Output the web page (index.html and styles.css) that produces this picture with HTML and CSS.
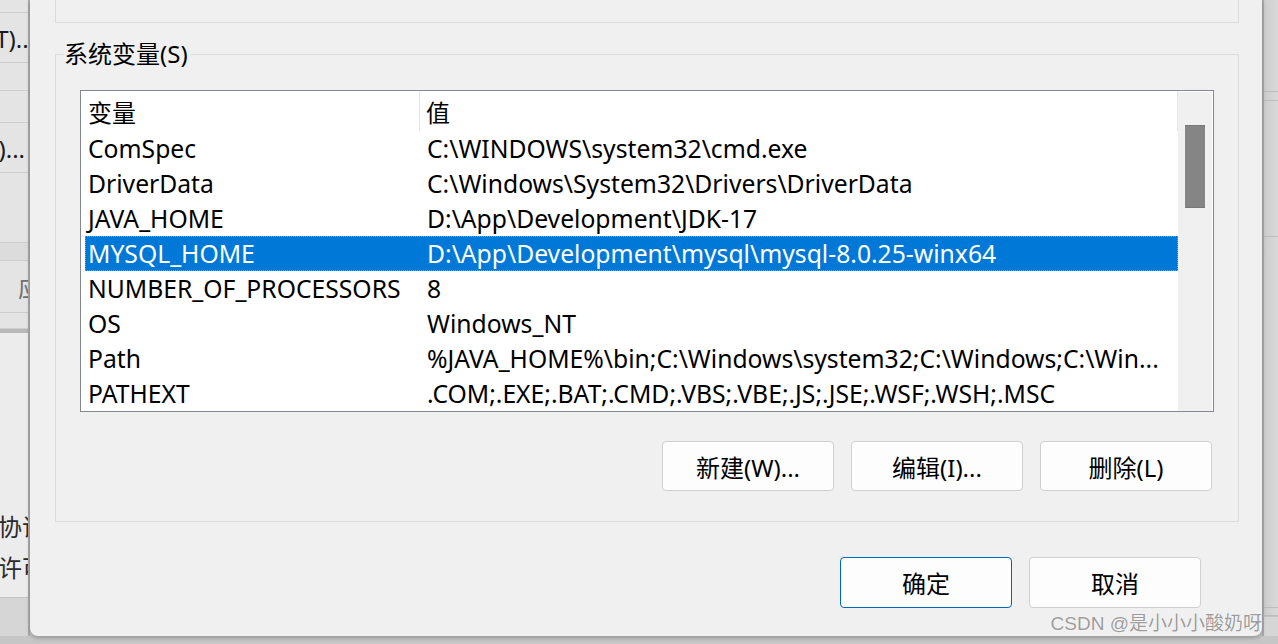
FILE: index.html
```html
<!DOCTYPE html>
<html lang="zh-CN">
<head>
  <meta charset="utf-8" />
  <title>环境变量</title>
  <meta name="viewport" content="width=device-width, initial-scale=1" />
  <link rel="stylesheet" href="styles.css">
</head>
<body>
  <div class="desk">
    <!-- window behind, left -->
    <div class="behind behindLeft">
      <div class="strip" style="height:13px"></div>
      <div class="strip cut" style="height:50px"><span class="endLong">编辑(T)...</span></div>
      <div class="strip" style="height:28px"></div>
      <div class="strip" style="height:32px"></div>
      <div class="strip cut" style="height:50px"><span class="endShort">浏览(B)...</span></div>
      <div class="strip" style="height:70px"></div>
      <div class="strip band" style="height:18px"></div>
      <div class="strip muted" style="height:52px"><span class="applyText">应用(A)</span></div>
      <div class="strip" style="height:16px"></div>
      <div class="strip edge"></div>
      <div class="strip plain" style="height:172px"></div>
      <div class="strip plain textRow" style="height:41px"><span>协议</span></div>
      <div class="strip plain textRow" style="height:41px"><span>许可</span></div>
      <div class="strip plain" style="height:10px"></div>
      <div class="strip low"></div>
    </div>

    <!-- ENVIRONMENT VARIABLES DIALOG -->
    <div class="dialog">
      <div class="groupTop"></div>

      <fieldset class="groupSys">
        <legend>系统变量(S)</legend>

        <div class="listbox">
          <div class="list">
            <div class="headRow">
              <div class="hCol1">变量</div>
              <div class="hCol2">值</div>
            </div>
            <div class="row"><div class="col1">ComSpec</div><div class="col2">C:\WINDOWS\system32\cmd.exe</div></div>
            <div class="row"><div class="col1">DriverData</div><div class="col2">C:\Windows\System32\Drivers\DriverData</div></div>
            <div class="row"><div class="col1">JAVA_HOME</div><div class="col2">D:\App\Development\JDK-17</div></div>
            <div class="row selected"><div class="col1">MYSQL_HOME</div><div class="col2">D:\App\Development\mysql\mysql-8.0.25-winx64</div></div>
            <div class="row"><div class="col1">NUMBER_OF_PROCESSORS</div><div class="col2">8</div></div>
            <div class="row"><div class="col1">OS</div><div class="col2">Windows_NT</div></div>
            <div class="row"><div class="col1">Path</div><div class="col2">%JAVA_HOME%\bin;C:\Windows\system32;C:\Windows;C:\Win...</div></div>
            <div class="row"><div class="col1">PATHEXT</div><div class="col2">.COM;.EXE;.BAT;.CMD;.VBS;.VBE;.JS;.JSE;.WSF;.WSH;.MSC</div></div>
          </div>
          <div class="scrollbar"><div class="thumb"></div></div>
        </div>

        <div class="btnRow">
          <button class="btn">新建(W)...</button>
          <button class="btn">编辑(I)...</button>
          <button class="btn">删除(L)</button>
        </div>
      </fieldset>

      <div class="dialogBtns">
        <button class="btn btnTall btnDefault">确定</button>
        <button class="btn btnTall">取消</button>
      </div>
    </div>

    <!-- window behind, right -->
    <div class="behind behindRight">
      <div class="strip" style="height:92px"></div>
      <div class="strip" style="height:9px"></div>
      <div class="strip" style="height:136px"></div>
      <div class="strip" style="height:371px"></div>
      <div class="strip" style="height:8px"></div>
      <div class="strip low"></div>
    </div>
  </div>

  <div class="watermark">CSDN @是小小小酸奶呀</div>
</body>
</html>
```

FILE: styles.css
```css
/* ========== GLOBAL ========== */
* {
  box-sizing: border-box;
  margin: 0;
  padding: 0;
}
body {
  width: 1278px;
  height: 644px;
  background: #c6c6c6;
  font-family: "Noto Sans", "Noto Sans CJK SC", sans-serif;
  font-size: 24px;
  color: #000;
  overflow: hidden;
  position: relative;
}
.desk {
  display: flex;
  height: 636px;
}

/* ========== WINDOWS BEHIND ========== */
.behind {
  flex: none;
  display: flex;
  flex-direction: column;
  overflow: hidden;
}
.behindLeft {
  width: 30px;
  background: #e4e4e4;
  border-right: 2px solid #ababab;
}
.behindRight {
  width: 16px;
  background: linear-gradient(90deg, #cdcdcd, #d9d9d9);
  border-left: 2px solid #ababab;
}
.strip {
  flex: none;
  border-bottom: 1px solid #cdcdcd;
  display: flex;
  align-items: center;
  white-space: nowrap;
}
.behindRight .strip {
  border-bottom-color: #bdbdbd;
}
.strip.cut {
  justify-content: flex-end;
  color: #1a1a1a;
}
.endLong {
  margin-right: -7px;
}
.endShort {
  margin-right: 3px;
}
.strip.muted {
  color: #707070;
}
.applyText {
  margin-left: 18px;
}
.strip.band {
  background: #dcdcdc;
}
.strip.edge {
  height: 4px;
  background: #b9b9b9;
  border: none;
}
.strip.plain {
  background: #ececec;
  border: none;
}
.strip.textRow {
  color: #2b2b2b;
}
.strip.textRow span {
  margin-left: -2px;
}
.strip.low {
  flex: 1;
  background: #d6d6d6;
  border-top: 1px solid #c4c4c4;
  border-bottom: none;
}

/* ========== DIALOG ========== */
.dialog {
  flex: none;
  width: 1232px;
  background: #f0f0f0;
  border-radius: 0 0 8px 8px;
  padding: 0 23px 0 25px;
  display: flex;
  flex-direction: column;
  box-shadow: 0 2px 4px rgba(0, 0, 0, 0.25);
  position: relative;
  z-index: 1;
}
.groupTop {
  height: 23px;
  border: 1px solid #dcdcdc;
  border-top: none;
}
.groupSys {
  margin-top: 19px;
  border: 1px solid #dcdcdc;
  padding: 0 24px 30px 24px;
}
.groupSys legend {
  margin-left: -16px;
  padding: 0 3px 0 0;
  line-height: 24px;
  font-size: 24px;
}

/* ========== LIST ========== */
.listbox {
  margin-top: 24px;
  height: 322px;
  border: 1px solid #828790;
  background: #fff;
  display: flex;
  overflow: hidden;
}
.list {
  width: 1097px;
  flex: none;
}
.headRow {
  height: 40px;
  display: flex;
  align-items: stretch;
}
.hCol1,
.hCol2 {
  display: flex;
  align-items: center;
  border-right: 1px solid #e5e5e5;
}
.hCol1 {
  width: 339px;
  padding-left: 7px;
}
.hCol2 {
  flex: 1;
  padding-left: 6px;
}
.row {
  margin-left: 4px;
  height: 35px;
  display: flex;
  align-items: center;
  white-space: nowrap;
  font-size: 24.7px;
}
.col1 {
  width: 339px;
  padding-left: 3px;
  flex: none;
}
.col2 {
  flex: 1;
  padding-left: 3px;
  overflow: hidden;
  text-overflow: ellipsis;
}
.row.selected {
  background: #0078d7;
  color: #fff;
  outline: 1px dotted #f08a24;
  outline-offset: -1px;
}
.scrollbar {
  flex: none;
  width: 34px;
  margin-top: 1px;
  background: #f0f0f0;
  padding: 33px 0 0 7px;
}
.thumb {
  width: 20px;
  height: 83px;
  background: #858585;
  border-top: 1px solid #777;
  border-bottom: 1px solid #777;
}

/* ========== BUTTONS ========== */
.btnRow {
  margin-top: 29px;
  display: flex;
  justify-content: flex-end;
  gap: 17px;
  padding-right: 2px;
}
.btn {
  width: 172px;
  height: 50px;
  border: 1px solid #d0d0d0;
  border-radius: 4px;
  background: #fdfdfd;
  font-family: inherit;
  font-size: 24px;
  color: #000;
  cursor: pointer;
}
.dialogBtns {
  margin-top: 35px;
  display: flex;
  justify-content: flex-end;
  gap: 17px;
  padding-right: 38px;
}
.btnTall {
  height: 51px;
}
.btnDefault {
  border-color: #0067c0;
}

/* ========== WATERMARK ========== */
.watermark {
  position: absolute;
  right: 16px;
  bottom: 8px;
  font-family: "Liberation Sans", "Noto Sans CJK SC", sans-serif;
  font-size: 19px;
  line-height: 24px;
  color: #9c9c9c;
  text-shadow: 0 0 1px #fff, 0 0 1px #fff;
  z-index: 2;
}
```
